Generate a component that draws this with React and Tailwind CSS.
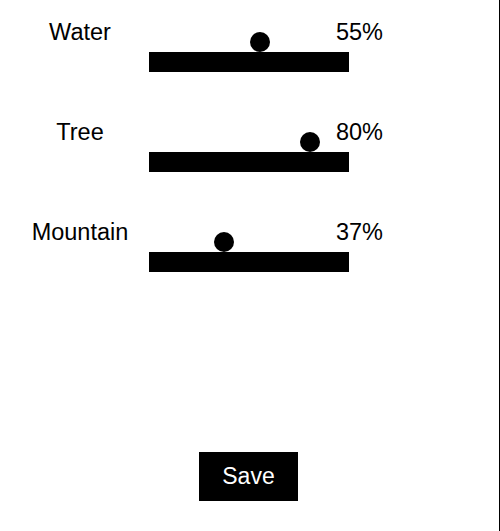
import React from "react";

const rows = [
  { label: "Water", pct: 55 },
  { label: "Tree", pct: 80 },
  { label: "Mountain", pct: 37 },
];

export default function App() {
  return (
    <div
      className="w-[500px] h-[531px] bg-white border-r border-black text-black flex flex-col"
      style={{ fontFamily: '"Liberation Sans", Arial, sans-serif' }}
    >
      {rows.map((r) => (
        <div key={r.label} className="flex h-[100px] shrink-0">
          <div className="w-[160px] shrink-0 text-center text-[23.5px] leading-[24px] pt-[20px]">
            {r.label}
          </div>
          <div className="ml-[-11px] w-[200px] shrink-0 flex flex-col">
            <div className="relative h-[52px]">
              <div
                className="absolute bottom-0 w-[20px] h-[20px] rounded-full bg-black"
                style={{ left: `${(r.pct / 100) * 200 - 9.5}px` }}
              />
            </div>
            <div className="h-[20px] bg-black" />
          </div>
          <div className="ml-[-14px] w-[48px] shrink-0 text-right text-[23.5px] leading-[24px] pt-[20px] whitespace-nowrap">
            {r.pct}%
          </div>
        </div>
      ))}
      <div className="flex justify-center pt-[152px]">
        <button className="w-[99px] h-[49px] bg-black text-white text-[23px] leading-[23px] ml-[-2px]">
          Save
        </button>
      </div>
    </div>
  );
}
